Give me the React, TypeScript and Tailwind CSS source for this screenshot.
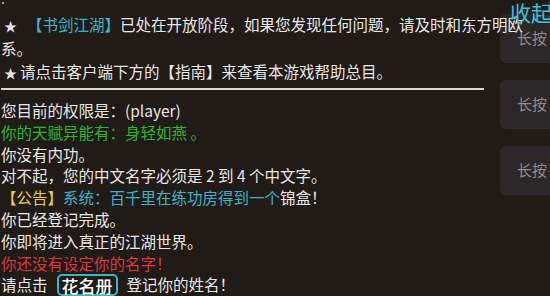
import React from 'react'

const font = { fontFamily: '"Noto Sans CJK SC", "Noto Sans", sans-serif' }

function SideButton() {
  return (
    <div className="flex h-[49px] w-[70px] items-center rounded-md bg-[#2d2a2b]/90 pl-[17px] text-[15px] text-[#8c8a8a]">
      长按
    </div>
  )
}

export default function App() {
  return (
    <div
      className="relative h-[296px] w-[550px] overflow-hidden bg-[#211b18] text-[15.5px] text-[#e9e7e4]"
      style={font}
    >
      <div className="absolute right-[-20px] top-[14px] flex flex-col gap-[17px]">
        <SideButton />
        <SideButton />
        <SideButton />
      </div>

      <div className="relative flex flex-col pl-[1px]">
        <div className="ml-[1px] mt-[2px] h-[2px] w-[2px] bg-[#9a9a9a]" />
        <div className="mt-[9px] flex flex-col leading-[23px]">
          <div className="whitespace-nowrap">
            <span className="mr-[10px] ml-[3px] text-[13px]">★</span>
            <span className="text-[#3bb6c6]">【书剑江湖】</span>已处在开放阶段，如果您发现任何问题，请及时和东方明欧
          </div>
          <div>系。</div>
          <div className="whitespace-nowrap">
            <span className="mr-[3px] ml-[3px] text-[13px]">★</span>请点击客户端下方的【指南】来查看本游戏帮助总目。
          </div>
        </div>
        <div className="mt-[4px] h-[2px] w-[483px] bg-[#d8d6d4]" />
        <div className="mt-[10px] flex flex-col leading-[21.8px]">
          <div>您目前的权限是：(player)</div>
          <div className="text-[#2bb52b]">你的天赋异能有：身轻如燕 。</div>
          <div>你没有内功。</div>
          <div>对不起，您的中文名字必须是 2 到 4 个中文字。</div>
          <div className="whitespace-nowrap">
            <span className="text-[#e6cf3a]">【公告】</span>
            <span className="text-[#3bb3c6]">系统：百千里在练功房得到一个</span>锦盒！
          </div>
          <div>你已经登记完成。</div>
          <div>你即将进入真正的江湖世界。</div>
          <div className="text-[#d8393a]">你还没有设定你的名字！</div>
          <div className="flex h-[22px] items-center whitespace-nowrap">
            <span>请点击</span>
            <span className="mx-[9px] flex h-[22px] items-center rounded-[5px] border-2 border-[#3ab5c4] px-[3px] text-[17px] font-medium leading-none text-white">
              花名册
            </span>
            <span>登记你的姓名！</span>
          </div>
        </div>
      </div>

      <div className="absolute left-[510px] top-[-1px] whitespace-nowrap text-[21px] leading-[26px] text-[#3cc3dc]">
        收起
      </div>
    </div>
  )
}
